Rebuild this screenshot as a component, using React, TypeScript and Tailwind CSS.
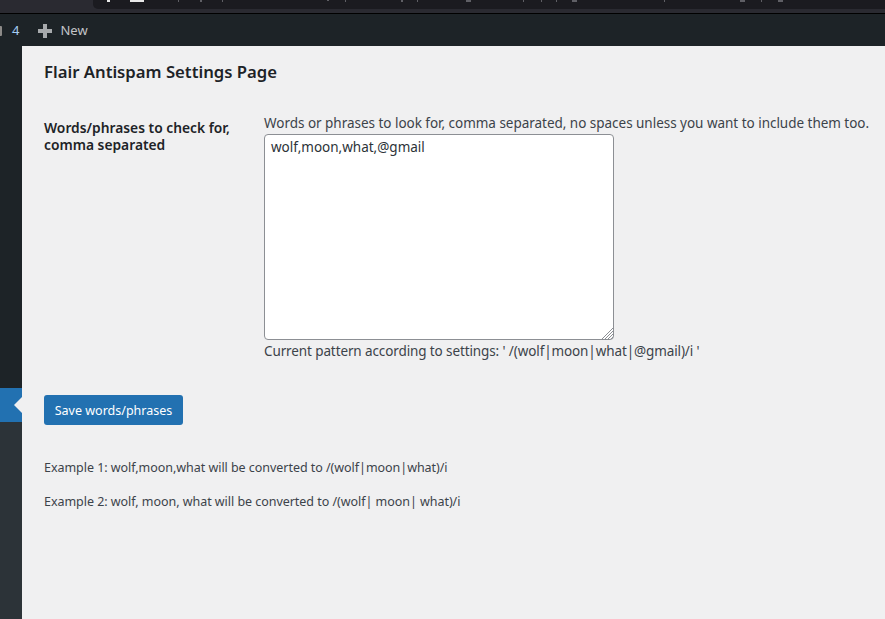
const font = "font-['Noto_Sans',sans-serif]";

// bottoms of the address bar text that is cut off by the window edge
const clippedGlyphs: [number, number, number][] = [
  [178, 1, 2], [200, 2, 2], [222, 1, 2], [327, 2, 1], [345, 1, 2], [401, 2, 2], [417, 1, 2],
  [466, 5, 2], [523, 1, 2], [541, 1, 2], [556, 1, 2], [572, 5, 2], [664, 1, 2], [740, 5, 2],
  [761, 1, 2], [778, 5, 2],
];

export default function App() {
  return (
    <div className={`flex h-[619px] w-[885px] flex-col overflow-hidden bg-[#f0f0f1] ${font} text-[#3c434a]`}>
      {/* Browser strip above the admin bar */}
      <div className="relative h-[13px] bg-[#2a2a31]">
        <div className="ml-[93px] h-[9px] rounded-bl-[5px] bg-[#1b1b20]" />
        <svg className="absolute left-0 top-0" width="885" height="9">
          <rect x="107" y="0" width="3" height="2" fill="#e8e8e8" />
          <rect x="130" y="0" width="14" height="2" fill="#e8e8e8" />
          {clippedGlyphs.map(([x, w, h]) => (
            <rect key={x} x={x} y={0} width={w} height={h} fill="#5f5f65" />
          ))}
        </svg>
      </div>
      {/* Admin bar */}
      <div className="flex h-[33px] items-center border-t border-black bg-[#1d2327] pt-[1px] text-[13px] text-[#c3c4c7]">
        <div className="h-[10px] w-[2px] rounded-r-[1px] bg-[#8c8a88]" />
        <span className="ml-[10px] text-[#a5cdf2]">4</span>
        <svg className="ml-[19px]" width="14" height="14" viewBox="0 0 14 14">
          <path d="M5 0h4v5h5v4H9v5H5V9H0V5h5z" fill="#a7aaad" />
        </svg>
        <span className="ml-[8px]">New</span>
      </div>
      <div className="flex min-h-0 flex-1">
        {/* Collapsed admin menu */}
        <div className="flex w-[22px] shrink-0 flex-col bg-[#1d2327]">
          <div className="h-[342px]" />
          <div className="relative h-[34px] bg-[#2271b1]">
            <div className="absolute right-0 top-[9px] h-0 w-0 border-y-[8px] border-r-[8px] border-y-transparent border-r-[#f0f0f1]" />
          </div>
          <div className="flex-1 bg-[#2c3338]" />
        </div>
        {/* Settings page */}
        <div className="flex-1 pl-[22px]">
          <h1 className="mt-[16px] text-[16.7px] font-semibold leading-[20px] text-[#1d2327]">Flair Antispam Settings Page</h1>
          <div className="mt-[31px] flex">
            <div className="w-[220px] shrink-0 pt-[6px] text-[13.8px] font-semibold leading-[17px] text-[#1d2327]">
              Words/phrases to check for, comma separated
            </div>
            <div className="min-w-0">
              <p className="whitespace-nowrap text-[13.5px] leading-[21px] tracking-[-0.025px]">
                Words or phrases to look for, comma separated, no spaces unless you want to include them too.
              </p>
              <div className="relative h-[206px] w-[350px]">
                <textarea
                  readOnly
                  value="wolf,moon,what,@gmail"
                  className="block h-full w-full resize-none rounded-[4px] border border-[#8c8f94] bg-white px-[6px] py-[2px] text-[13.5px] leading-[20px] text-[#2c3338] outline-none"
                />
                {/* resize grip */}
                <svg className="absolute bottom-[1px] right-[1px]" width="11" height="11" viewBox="0 0 11 11">
                  <path d="M0 11 11 0M3 11l8-8M6 11l5-5M9 11l2-2" stroke="#8c8f94" strokeWidth="1" fill="none" />
                </svg>
              </div>
              <p className="mt-[1px] whitespace-nowrap text-[13.5px] leading-[20px] tracking-[-0.11px]">
                Current pattern according to settings: ' /(wolf|moon|what|@gmail)/i '
              </p>
            </div>
          </div>
          <button className="mt-[34px] block h-[30px] w-[139px] rounded-[3px] bg-[#2271b1] pt-[2px] text-[12.5px] text-white">
            Save words/phrases
          </button>
          <p className="mt-[33px] text-[12.5px] leading-[20px] tracking-[-0.04px]">Example 1: wolf,moon,what will be converted to /(wolf|moon|what)/i</p>
          <p className="mt-[14px] text-[12.5px] leading-[20px] tracking-[-0.04px]">Example 2: wolf, moon, what will be converted to /(wolf| moon| what)/i</p>
        </div>
      </div>
    </div>
  );
}
